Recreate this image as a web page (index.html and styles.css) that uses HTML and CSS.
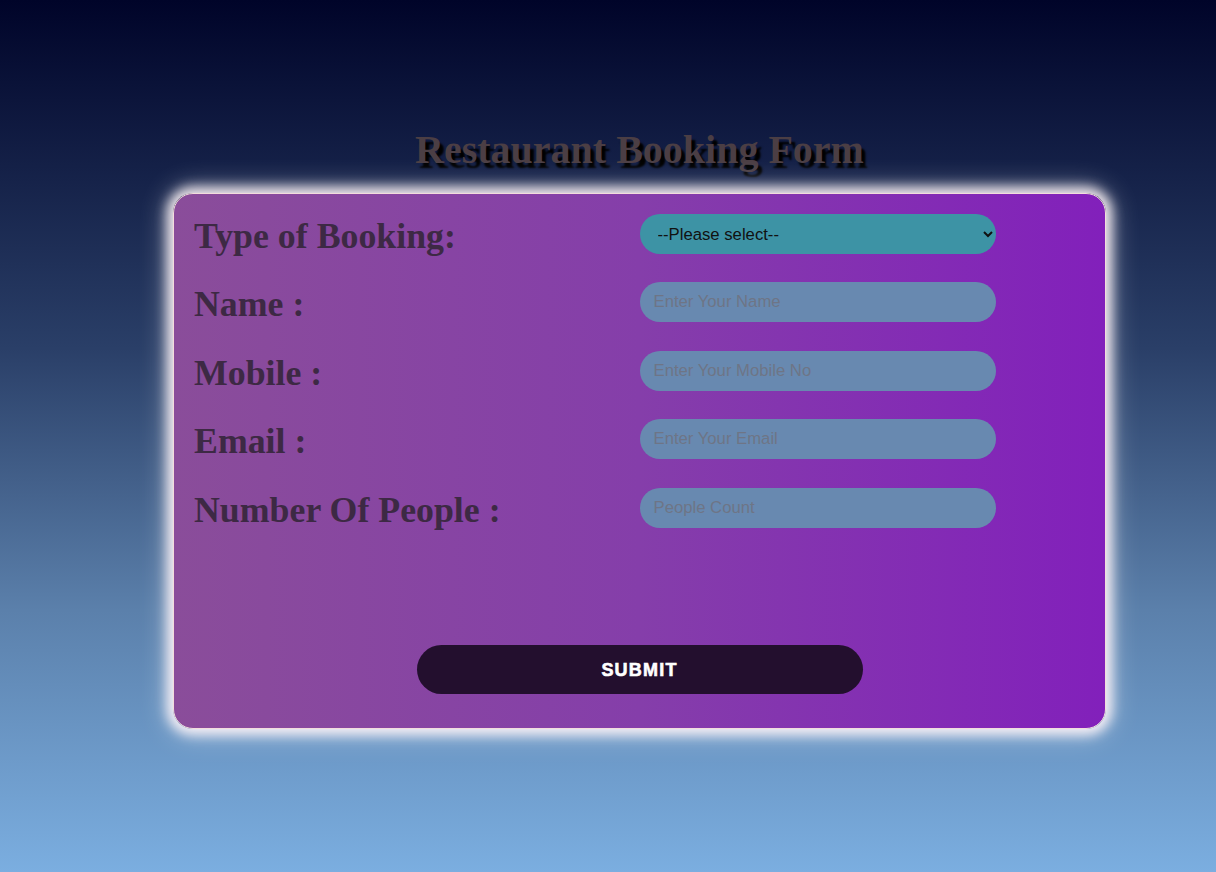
FILE: index.html
```html
<!DOCTYPE html>
<html>
<head>
<meta charset="utf-8">
<title>Restaurant Booking Form</title>
<link rel="stylesheet" href="styles.css">
</head>
<body>
<div class="page">
  <h1 class="title">Restaurant Booking Form</h1>
  <form class="card">
    <div class="rows">
      <div class="row">
        <label class="label">Type of Booking:</label>
        <div class="field">
          <select class="select">
            <option>--Please select--</option>
            <option>Dinner</option>
            <option>Lunch</option>
          </select>
        </div>
      </div>
      <div class="row">
        <label class="label">Name :</label>
        <div class="field"><input class="input" type="text" placeholder="Enter Your Name"></div>
      </div>
      <div class="row">
        <label class="label">Mobile :</label>
        <div class="field"><input class="input" type="text" placeholder="Enter Your Mobile No"></div>
      </div>
      <div class="row">
        <label class="label">Email :</label>
        <div class="field"><input class="input" type="text" placeholder="Enter Your Email"></div>
      </div>
      <div class="row">
        <label class="label">Number Of People :</label>
        <div class="field"><input class="input" type="text" placeholder="People Count"></div>
      </div>
    </div>
    <div class="actions">
      <button class="submit" type="button">SUBMIT</button>
    </div>
  </form>
</div>
</body>
</html>
```

FILE: styles.css
```css
html, body {
  margin: 0;
  padding: 0;
  height: 100%;
}
body {
  background: linear-gradient(to bottom, #000429 0%, #2a3f68 40%, #5b80ab 70%, #7baee0 100%);
  font-family: "Liberation Serif", "Times New Roman", serif;
}
.page {
  width: 933px;
  margin-left: calc(50% - 435px);
  padding-top: 127px;
  display: flex;
  flex-direction: column;
  align-items: center;
}
.title {
  margin: 0;
  font-size: 40px;
  line-height: 46px;
  font-weight: bold;
  color: #4b3e44;
  text-shadow: 4px 5px 2px #000;
  margin-bottom: 20px;
}
.card {
  box-sizing: border-box;
  width: 933px;
  height: 536px;
  padding: 20px;
  border-radius: 20px;
  border: 1px solid #f3dcdc;
  background: linear-gradient(to right, #8a4d9a 0%, #853eaa 50%, #8220bb 100%);
  box-shadow: 0 0 12px 6px rgba(255, 245, 248, 0.9), 0 0 26px 8px rgba(255, 255, 255, 0.35);
  display: flex;
  flex-direction: column;
}
.rows {
  display: flex;
  flex-direction: column;
  gap: 28.4px;
}
.row {
  display: grid;
  grid-template-columns: 1fr 1fr;
  height: 40px;
  align-items: center;
}
.label {
  font-size: 35.8px;
  font-weight: bold;
  color: #3d2944;
  line-height: 40px;
  position: relative;
  top: 2px;
}
.field {
  display: flex;
}
.select, .input {
  box-sizing: border-box;
  width: 80%;
  height: 40px;
  border: none;
  border-radius: 20px;
  font-family: "Liberation Sans", Arial, sans-serif;
  font-size: 16.7px;
  outline: none;
}
.select {
  background-color: #3d93a5;
  color: #111;
  padding: 0 8px 0 14px;
}
.input {
  background-color: #6889b0;
  color: #222;
  padding: 0 14px;
}
.input::placeholder {
  color: #6e7586;
}
.actions {
  margin-top: auto;
  margin-bottom: 14px;
  display: flex;
  justify-content: center;
}
.submit {
  width: 446px;
  height: 49px;
  border: none;
  border-radius: 25px;
  background: #230f2e;
  color: #fff;
  font-family: "Liberation Sans", Arial, sans-serif;
  font-weight: bold;
  font-size: 18px;
  letter-spacing: 1.2px;
  -webkit-text-stroke: 0.6px #fff;
  padding-top: 2px;
  cursor: pointer;
}
```
